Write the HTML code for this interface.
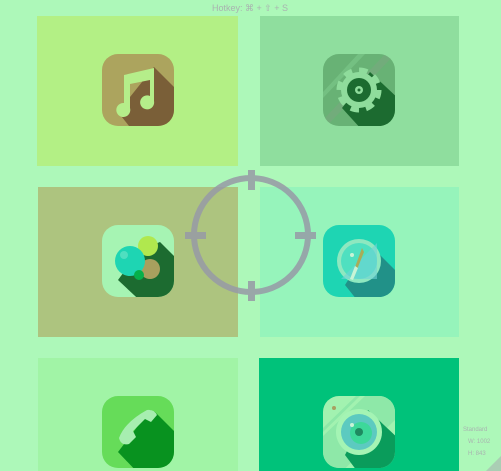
<!DOCTYPE html>
<html><head><style>
html,body{margin:0;padding:0;width:501px;height:471px;overflow:hidden;background:#adf8b9;font-family:"Liberation Sans",sans-serif}
</style></head><body>
<svg width="501" height="471" viewBox="0 0 501 471" xmlns="http://www.w3.org/2000/svg" style="position:absolute;left:0;top:0">
<defs>
<clipPath id="c1"><rect x="102" y="54" width="72" height="72" rx="16"/></clipPath>
<clipPath id="c2"><rect x="323" y="54" width="72" height="72" rx="16"/></clipPath>
<clipPath id="c3"><rect x="102" y="225" width="72" height="72" rx="16"/></clipPath>
<clipPath id="c4"><rect x="323" y="225" width="72" height="72" rx="16"/></clipPath>
<clipPath id="c5"><rect x="102" y="396" width="72" height="72" rx="16"/></clipPath>
<clipPath id="c6"><rect x="323" y="396" width="72" height="72" rx="16"/></clipPath>
</defs>
<text x="250" y="11" text-anchor="middle" font-size="9" fill="#a9b3b0" font-family="Liberation Sans, DejaVu Sans, sans-serif">Hotkey: ⌘ + ⇧ + S</text>
<rect x="37" y="16" width="201" height="150" fill="#b3f085"/>
<rect x="260" y="16" width="199" height="150" fill="#8fde9e"/>
<rect x="38" y="187" width="200" height="150" fill="#adc47f"/>
<rect x="260" y="187" width="199" height="150" fill="#96f4bb"/>
<rect x="38" y="358" width="200" height="113" fill="#a1f4a6"/>
<rect x="259" y="358" width="200" height="113" fill="#00c27a"/>

<g clip-path="url(#c1)">
<rect x="102" y="54" width="72" height="72" fill="#aca45e"/>
<polygon points="154,67 180,93 180,140 140,140 118,112" fill="#7a5f38"/>
<path d="M124,75 L154,68 L154,101 A7,7 0 1 1 150,96 L150,80 L130,84 L130,108 A7,7 0 1 1 124,103 Z" fill="#b5ee8a"/>
</g>
<g clip-path="url(#c2)">
<rect x="323" y="54" width="72" height="72" fill="#68b275"/>
<polygon points="323,92 358,54 365,54 323,98" fill="#7dc98a" opacity=".6"/>
<polygon points="323,120 385,54 395,54 323,130" fill="#7aa87e" opacity=".6"/>
<polygon points="370,72 400,100 400,130 362,130 342,108" fill="#1c6b30"/>
<circle cx="359" cy="90" r="20" fill="none" stroke="#8fdc9c" stroke-width="5" stroke-dasharray="8.5 7.2"/>
<circle cx="359" cy="90" r="18" fill="#8fdc9c"/>
<circle cx="359" cy="90" r="12" fill="#1c6b30"/>
<circle cx="359" cy="90" r="4" fill="#8fdc9c"/>
<circle cx="359" cy="90" r="1.5" fill="#1c6b30"/>
</g>
<g clip-path="url(#c3)">
<rect x="102" y="225" width="72" height="72" fill="#a6f4b3"/>
<polygon points="160,242 180,262 180,310 150,310 118,280 140,250" fill="#1c6b30"/>
<circle cx="148" cy="246" r="10" fill="#b0e84e"/>
<circle cx="150" cy="269" r="10" fill="#a8a05e"/>
<circle cx="130" cy="261" r="15" fill="#1ed5b3"/>
<circle cx="124" cy="255" r="4" fill="#4fdfc0"/>
<circle cx="139" cy="275" r="5" fill="#06b04a"/>
</g>
<g clip-path="url(#c4)">
<rect x="323" y="225" width="72" height="72" fill="#1ed5b3"/>
<polygon points="370,245 400,275 400,310 365,310 345,285" fill="#219188"/>
<circle cx="359" cy="261" r="22" fill="#8ee8c0"/>
<circle cx="359" cy="261" r="18" fill="#4fe0c0"/>
<polygon points="359,261 377,243 377,279 341,279" fill="#6fd2d6" opacity=".6"/>
<path d="M362,248 L364,252 L356,272 L354,270 Z" fill="#a9ac58"/>
<path d="M355,266 L358,268 L353,280 L350,279 Z" fill="#c8f4d6"/>
<circle cx="352" cy="255" r="2" fill="#c8f4d6"/>
</g>
<g clip-path="url(#c5)">
<rect x="102" y="396" width="72" height="72" fill="#66dc59"/>
<polygon points="155,412 180,437 180,475 140,475 118,452 150,410" fill="#08921f"/>
<path d="M147,410 Q154,409 157,415 L151,422 L145,419 L133,431 L136,437 L129,444 Q121,446 119,438 Q125,422 147,410 Z" fill="#a7eeb0"/>
</g>
<g clip-path="url(#c6)">
<rect x="323" y="396" width="72" height="72" fill="#a2f2b0"/>
<polygon points="323,436 365,396 395,396 395,420 323,490" fill="#8ee8a8"/>
<polygon points="323,428 356,396 360,396 323,432" fill="#8ee8a8"/>
<polygon points="368,410 400,440 400,475 360,475 345,455" fill="#0a9c5b"/>
<circle cx="359" cy="432" r="23" fill="#a4f4b4"/>
<circle cx="359" cy="432" r="18" fill="#5ccac0"/>
<circle cx="361" cy="433" r="11" fill="#3dd89a"/>
<circle cx="359" cy="432" r="4" fill="#1e8a60"/>
<circle cx="352" cy="425" r="2" fill="#c8f4d6"/>
<circle cx="334" cy="408" r="2" fill="#a8a060"/>
</g>

<g opacity=".85">
<circle cx="251" cy="235" r="57" fill="none" stroke="#979aa6" stroke-width="6"/>
<rect x="248" y="170" width="7" height="20" fill="#979aa6"/>
<rect x="248" y="281" width="7" height="20" fill="#979aa6"/>
<rect x="185" y="232" width="21" height="7" fill="#979aa6"/>
<rect x="295" y="232" width="21" height="7" fill="#979aa6"/>
</g>

<text x="463" y="431" font-size="6" fill="#a9b3b0">Standard</text>
<text x="468" y="443" font-size="6" fill="#a9b3b0">W: 1002</text>
<text x="468" y="455" font-size="6" fill="#a9b3b0">H: 843</text>
<polygon points="501,456 501,471 486,471" fill="#a9b3b0" opacity=".6"/>
</svg>
</body></html>
